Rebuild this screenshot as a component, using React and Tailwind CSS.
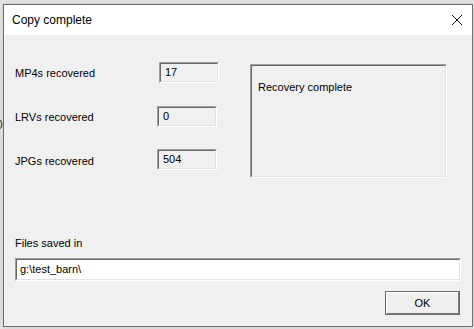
import React from "react";

function Sunken({ className = "", fill = "bg-[#f0f0f0]", children }) {
  return (
    <div className={`border border-t-[#a0a0a0] border-l-[#a0a0a0] border-b-white border-r-white ${className}`}>
      <div className={`w-full h-full border border-t-[#696969] border-l-[#696969] border-b-[#e3e3e3] border-r-[#e3e3e3] ${fill}`}>
        {children}
      </div>
    </div>
  );
}

function Row({ label, value, boxMl, labelPt }) {
  return (
    <div className="flex items-center h-[21px]">
      <div className={`w-[142px] text-[11px] leading-[13px] text-black ${labelPt}`}>{label}</div>
      <Sunken className={`w-[60px] h-[21px] ${boxMl}`}>
        <div className="pl-[4px] pt-[2px] text-[11px] leading-[13px] text-black">{value}</div>
      </Sunken>
    </div>
  );
}

export default function App() {
  return (
    <div
      className="relative w-[474px] h-[329px] bg-[#e6e6e6] pt-[4px] pl-[3px] overflow-hidden"
      style={{ fontFamily: '"Liberation Sans", Arial, sans-serif' }}
    >
      <div className="absolute left-[-4px] top-[119px] text-[12px] leading-[13px] text-[#333]">0</div>
      <div className="w-[470px] h-[323px] border border-[#6e6e6e] flex flex-col shadow-[0_0_6px_rgba(0,0,0,0.15)]">
        <div className="h-[30px] bg-white flex items-center justify-between pl-[8px] pr-[6px]">
          <span className="text-[12px] leading-[14px] text-black">Copy complete</span>
          <svg width="12" height="12" viewBox="0 0 12 12" className="mr-[3px]">
            <path d="M1 1 L11 11 M11 1 L1 11" stroke="#111" strokeWidth="1" fill="none" />
          </svg>
        </div>
        <div className="flex-1 bg-[#f0f0f0] flex flex-col pl-[11px]">
          <div className="flex">
            <div className="w-[204px] pt-[27px] flex flex-col">
              <Row label="MP4s recovered" value="17" boxMl="ml-[2px]" labelPt="pt-[2px]" />
              <div className="h-[23px]" />
              <Row label="LRVs recovered" value="0" boxMl="ml-0" labelPt="pt-[2px]" />
              <div className="h-[22px]" />
              <Row label="JPGs recovered" value="504" boxMl="ml-0" labelPt="pt-[4px]" />
            </div>
            <Sunken className="ml-[31px] mt-[29px] w-[197px] h-[114px]">
              <div className="pl-[6px] pt-[15px] text-[11px] leading-[13px] text-black">Recovery complete</div>
            </Sunken>
          </div>
          <div className="mt-[59px] text-[11px] leading-[13px] text-black">Files saved in</div>
          <Sunken className="mt-[8px] w-[446px] h-[23px]" fill="bg-white">
            <div className="pl-[3px] pt-[3px] text-[11px] leading-[13px] text-black">g:\test_barn\</div>
          </Sunken>
          <div className="flex justify-end pr-[12px] mt-[10px]">
            <div className="w-[75px] h-[24px] border border-[#6b6b6b]">
              <div className="w-full h-full border border-t-white border-l-white border-b-[#7a7a7a] border-r-[#7a7a7a] bg-[#efefef] flex items-center justify-center text-[11px] leading-[13px] text-black">
                OK
              </div>
            </div>
          </div>
        </div>
      </div>
    </div>
  );
}
